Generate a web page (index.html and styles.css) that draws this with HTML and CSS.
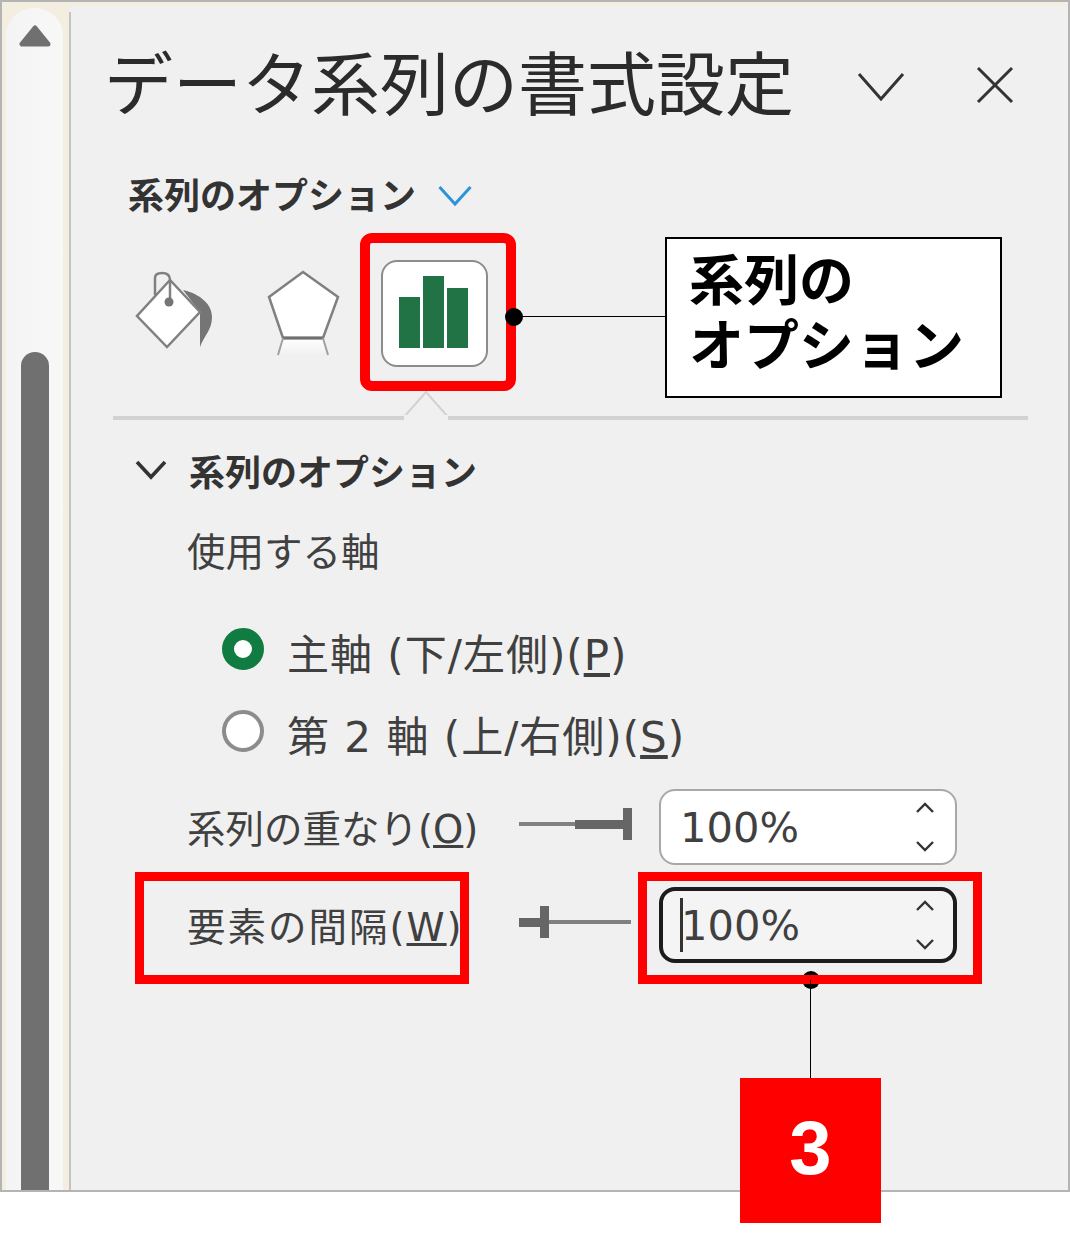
FILE: index.html
```html
<!DOCTYPE html>
<html lang="ja">
<head>
<meta charset="utf-8">
<title>データ系列の書式設定</title>
<link rel="stylesheet" href="styles.css">
</head>
<body>
<div class="stage">
  <div class="frame">
    <aside class="rail">
      <div class="track">
        <svg class="arrow" width="32" height="24" viewBox="0 0 32 24"><path d="M16 3 L3 19 H29 Z" fill="#707070" stroke="#707070" stroke-width="5" stroke-linejoin="round"/></svg>
        <div class="thumb"></div>
      </div>
    </aside>
    <main class="pane">
      <header class="titlebar">
        <h1 class="title">データ系列の書式設定</h1>
        <svg class="title-icon" width="48" height="32" viewBox="0 0 48 32"><path d="M2 3 L24 28 L46 3" fill="none" stroke="#333" stroke-width="3"/></svg>
        <svg class="title-icon close" width="40" height="40" viewBox="0 0 40 40"><path d="M3 3 L37 37 M37 3 L3 37" fill="none" stroke="#333" stroke-width="3"/></svg>
      </header>
      <div class="subhead">
        <span class="subhead-text">系列のオプション</span>
        <svg class="subhead-chevron" width="34" height="22" viewBox="0 0 34 22"><path d="M1.5 2 L17 19 L32.5 2" fill="none" stroke="#2b93d8" stroke-width="3"/></svg>
      </div>
      <nav class="tabs">
        <svg class="tab-icon" width="84" height="84" viewBox="0 0 84 84">
          <path d="M53 20 C70 24 82 34 82 47 C82 60 74 66 70 77 L70 42 Z" fill="#757575"/>
          <path d="M40 10 L70 42 L37 77 L7 46 Z" fill="#fff" stroke="#808080" stroke-width="2.5"/>
          <path d="M25 25 V8 Q25 3 32 3 Q40 3 40 10 V30" fill="none" stroke="#808080" stroke-width="2.5"/>
          <circle cx="39" cy="32" r="4.5" fill="#757575"/>
        </svg>
        <svg class="tab-icon shape" width="76" height="88" viewBox="0 0 76 88">
          <defs><linearGradient id="fade" x1="0" y1="0" x2="0" y2="1"><stop offset="0" stop-color="#fff"/><stop offset="1" stop-color="#f0f0f0"/></linearGradient></defs>
          <path d="M15 69 H59 L62 86 H12 Z" fill="url(#fade)"/>
          <path d="M37 3 L72 28 L57 69 H17 L3 28 Z" fill="#fff" stroke="#808080" stroke-width="2.5"/>
          <path d="M17 69 H57" stroke="#707070" stroke-width="3"/>
          <path d="M17 69 L12 86 M57 69 L62 86" stroke="#a0a0a0" stroke-width="2"/>
        </svg>
        <div class="tab-active">
          <svg width="69" height="72" viewBox="0 0 69 72">
            <rect x="0" y="21" width="21" height="51" fill="#217346"/>
            <rect x="24" y="0" width="21" height="72" fill="#217346"/>
            <rect x="48" y="12" width="21" height="60" fill="#217346"/>
          </svg>
        </div>
      </nav>
      <div class="rule">
        <svg class="notch" width="50" height="30" viewBox="0 0 50 30"><path d="M1 27 L24 1 L47 27" fill="#f0f0f0" stroke="#d2d2d2" stroke-width="2"/><rect x="2" y="24" width="44" height="6" fill="#f0f0f0"/></svg>
      </div>
      <section class="options">
        <div class="section-head">
          <svg width="32" height="20" viewBox="0 0 32 20"><path d="M2 2 L16 17 L30 2" fill="none" stroke="#333" stroke-width="3.6"/></svg>
          <span class="section-text">系列のオプション</span>
        </div>
        <div class="field-label">使用する軸</div>
        <label class="radio-row first">
          <span class="radio on"></span>
          <span>主軸 (下/左側)(<u>P</u>)</span>
        </label>
        <label class="radio-row">
          <span class="radio"></span>
          <span>第 2 軸 (上/右側)(<u>S</u>)</span>
        </label>
        <div class="spin-row">
          <span class="spin-label">系列の重なり(<u>O</u>)</span>
          <svg class="slider" width="116" height="38" viewBox="0 0 116 38"><path d="M1 19 H58" stroke="#808080" stroke-width="4"/><rect x="57" y="15" width="50" height="9" fill="#666"/><rect x="105" y="3" width="9" height="32" fill="#666"/></svg>
          <div class="spin"><span class="spin-value">100%</span>
            <svg class="spin-arrows" width="20" height="52" viewBox="0 0 20 52"><path d="M2 11 L10 3 L18 11 M2 41 L10 49 L18 41" fill="none" stroke="#333" stroke-width="2.4"/></svg>
          </div>
        </div>
        <div class="spin-row second">
          <span class="spin-label wide">要素の間隔(<u>W</u>)</span>
          <svg class="slider" width="116" height="38" viewBox="0 0 116 38"><path d="M30 19 H113" stroke="#808080" stroke-width="4"/><rect x="1" y="15" width="30" height="9" fill="#666"/><rect x="22" y="3" width="9" height="32" fill="#666"/></svg>
          <div class="spin focus"><span class="caret"></span><span class="spin-value">100%</span>
            <svg class="spin-arrows" width="20" height="52" viewBox="0 0 20 52"><path d="M2 11 L10 3 L18 11 M2 41 L10 49 L18 41" fill="none" stroke="#333" stroke-width="2.4"/></svg>
          </div>
        </div>
      </section>
    </main>
  </div>

  <span class="dot dot-spin"></span>
  <div class="mark mark-tab"></div>
  <div class="mark mark-label"></div>
  <div class="mark mark-spin"></div>
  <span class="dot dot-tab"></span>
  <span class="line line-h"></span>
  <span class="line line-v"></span>
  <div class="callout">系列の<br>オプション</div>
  <div class="badge">3</div>
</div>
</body>
</html>
```
FILE: styles.css
```css
* { box-sizing: border-box; }
html, body { margin: 0; padding: 0; background: #fff; }
body { font-family: "Noto Sans CJK JP", "Noto Sans", sans-serif; color: #333; }
.stage { position: relative; width: 1070px; height: 1240px; overflow: hidden; }
.frame {
  display: flex;
  width: 1070px;
  height: 1192px;
  border: 2px solid #b4b4b4;
  background: #f0f0f0;
  box-shadow: inset 0 4px 0 #f4eee0;
}
.rail {
  flex: 0 0 67px;
  background: #f4eee0;
  padding: 6px 6px 0 4px;
  display: flex;
}
.track {
  flex: 1;
  background: linear-gradient(90deg, #f4f4f4, #f8f8f8);
  border-radius: 28px 28px 0 0;
  display: flex;
  flex-direction: column;
  align-items: center;
  padding-top: 17px;
}
.arrow { flex: none; }
.thumb {
  margin-top: 303px;
  width: 28px;
  flex: 1;
  background: #707070;
  border-radius: 14px 14px 0 0;
}
.pane {
  flex: 1;
  border-left: 2px solid #c4c4c4;
  margin-top: 10px;
  padding: 0 40px 0 40px;
  position: relative;
  display: flex;
  flex-direction: column;
}
.titlebar { display: flex; align-items: center; height: 120px; padding-top: 24px; padding-bottom: 8px; }
.title { margin: 0 0 0 -7px; font-size: 69px; line-height: 88px; font-weight: 400; color: #2b2b2b; white-space: nowrap; flex: 1; }
.title-icon { flex: none; margin-right: 70px; margin-top: 14px; }
.title-icon.close { margin-right: 13px; margin-top: 10px; }
.subhead { display: flex; align-items: center; gap: 22px; margin: 36px 0 0 17px; height: 50px; }
.subhead-chevron { position: relative; top: 3px; }
.subhead-text, .section-text { font-size: 36px; font-weight: 700; color: #333; line-height: 50px; white-space: nowrap; }
.tabs { display: flex; align-items: flex-start; height: 180px; padding-left: 19px; position: relative; }
.tab-icon { flex: none; margin-top: 52px; }
.tab-icon.shape { margin-left: 52px; margin-top: 51px; }
.tab-active {
  position: absolute;
  left: 270px;
  top: 42px;
  width: 107px;
  height: 107px;
  background: #fff;
  border: 2px solid #8c8c8c;
  border-radius: 16px;
  display: flex;
  align-items: flex-end;
  justify-content: center;
  padding: 0 2px 17px 0;
}
.rule { height: 4px; margin: 18px 0 0 2px; background: #d2d2d2; width: 915px; position: relative; }
.notch { position: absolute; left: 289px; top: -25px; }
.options { display: flex; flex-direction: column; }
.section-head { display: flex; align-items: center; gap: 22px; margin: 25px 0 0 24px; height: 50px; }
.field-label { font-size: 38.5px; line-height: 50px; margin: 29px 0 0 76px; color: #404040; white-space: nowrap; }
.radio-row { display: flex; align-items: center; gap: 23px; height: 50px; margin: 0 0 0 111px; font-family: "DejaVu Sans", "Noto Sans CJK JP", sans-serif; font-size: 42px; letter-spacing: 1px; line-height: 50px; color: #404040; white-space: nowrap; }
.radio-row.first { margin-top: 57px; }
.radio-row + .radio-row { margin-top: 32px; }
.radio { flex: none; width: 42px; height: 42px; border-radius: 50%; background: #fff; border: 4px solid #8c8c8c; position: relative; top: -7px; }
.radio.on { border: 12px solid #107c41; }
.spin-row { display: flex; align-items: center; height: 76px; margin: 26px 0 0 76px; }
.spin-row.second { margin-top: 22px; }
.spin-label { flex: 0 0 331px; padding-top: 6px; font-family: "DejaVu Sans", "Noto Sans CJK JP", sans-serif; font-size: 38.5px; line-height: 50px; color: #404040; white-space: nowrap; }
.spin-label.wide { letter-spacing: 2px; }
.slider { flex: none; margin: 0 25px 6px 0; }
.spin { flex: none; position: relative; width: 298px; height: 76px; background: #fff; border: 2px solid #a8a8a8; border-radius: 16px; display: flex; align-items: center; padding: 2px 0 0 19px; }
.spin.focus { background: #f4f4f4; border: 4px solid #1c1c1c; padding-left: 18px; }
.spin-value { font-family: "DejaVu Sans", "Noto Sans", sans-serif; font-size: 41.6px; color: #404040; line-height: 50px; }
.spin-arrows { position: absolute; right: 20px; top: 10px; }
.spin.focus .spin-arrows { right: 18px; top: 8px; }
.caret { position: absolute; left: 17px; top: 7px; width: 3px; height: 54px; background: #333; }
.mark { position: absolute; border: 9px solid #f00; }
.mark-tab { left: 360px; top: 233px; width: 156px; height: 158px; border-radius: 12px; border-width: 10px; }
.mark-label { left: 135px; top: 872px; width: 334px; height: 112px; }
.mark-spin { left: 638px; top: 872px; width: 344px; height: 112px; }
.dot { position: absolute; width: 18px; height: 18px; border-radius: 50%; background: #000; }
.dot-tab { left: 505px; top: 308px; }
.dot-spin { left: 802px; top: 971px; }
.line { position: absolute; background: #000; }
.line-h { left: 514px; top: 316px; width: 152px; height: 1px; }
.line-v { left: 810px; top: 980px; width: 1px; height: 100px; }
.callout {
  position: absolute;
  left: 665px;
  top: 237px;
  width: 337px;
  height: 161px;
  background: #fff;
  border: 2px solid #000;
  padding: 5px 22px;
  font-size: 55px;
  line-height: 65px;
  font-weight: 700;
  color: #000;
}
.badge {
  position: absolute;
  left: 740px;
  top: 1078px;
  width: 141px;
  height: 145px;
  background: #f00;
  color: #fff;
  font-family: "Liberation Sans", sans-serif;
  font-weight: 700;
  font-size: 76px;
  padding-bottom: 6px;
  display: flex;
  align-items: center;
  justify-content: center;
}
```
